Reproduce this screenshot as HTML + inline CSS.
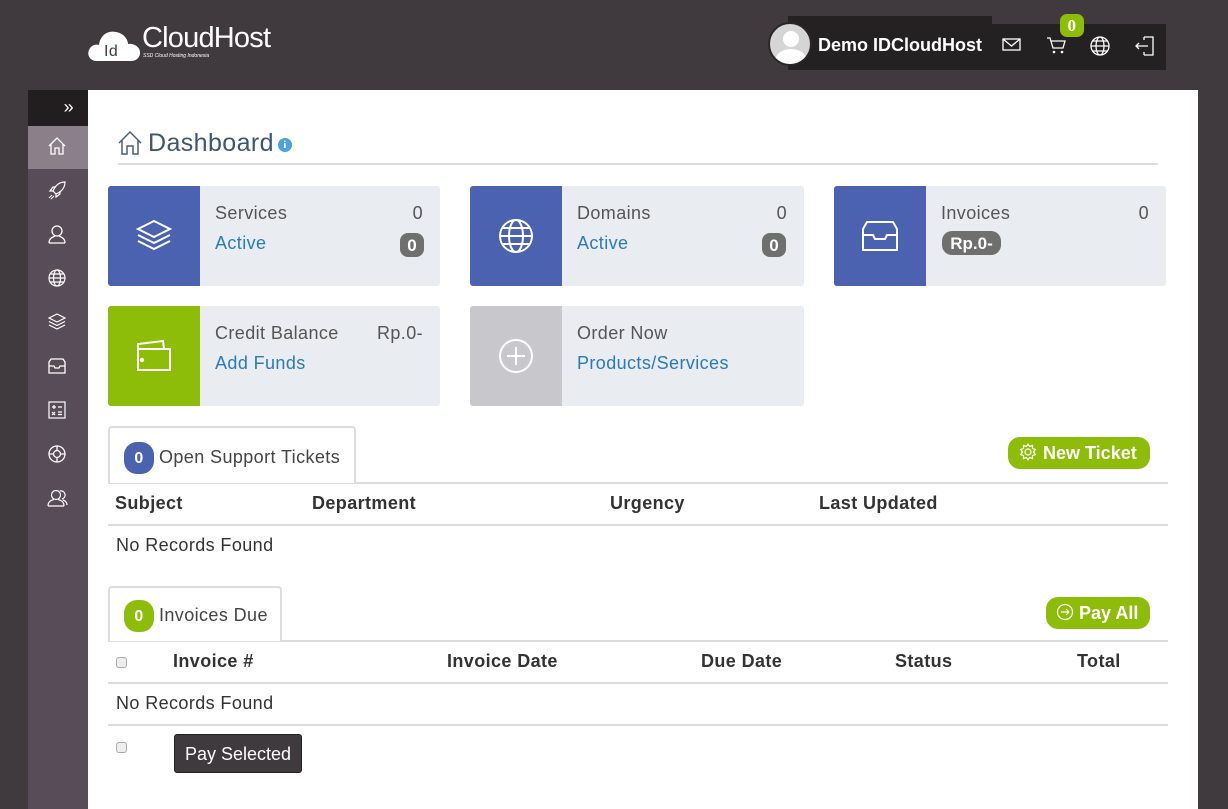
<!DOCTYPE html>
<html><head><meta charset="utf-8"><style>
*{box-sizing:border-box;margin:0;padding:0}
body{width:1228px;height:809px;background:#403a3e;font-family:"Liberation Sans",sans-serif;position:relative;overflow:hidden;color:#333;letter-spacing:0.4px}
.abs{position:absolute}
.side{left:28px;top:90px;width:60px;height:719px;background:#594c59}
.side .top{height:36px;background:#221e20;color:#fff;text-align:right;padding-right:14px;font-size:18px;line-height:34px}
.side .act{height:43px;background:#8b7f8a}
.side svg{position:absolute;left:19px}
.main{left:88px;top:90px;width:1110px;height:719px;background:#fff}
.card{position:absolute;height:100px;background:#e9ecf0;border-radius:3px;overflow:hidden}
.card .ic{position:absolute;left:0;top:0;width:92px;height:100px;display:flex;align-items:center;justify-content:center}
.card .t{position:absolute;left:107px;top:17px;font-size:18px;color:#555}
.card .l{position:absolute;left:107px;top:47px;font-size:18px;color:#2a7ab8}
.card .n{position:absolute;right:17px;top:17px;font-size:18px;color:#555}
.badge{position:absolute;background:#6f6f6f;color:#fff;font-weight:bold;border-radius:8px;font-size:17px;text-align:center;letter-spacing:0}
.th{position:absolute;font-weight:bold;font-size:18px;color:#333}
.hr{position:absolute;left:108px;width:1060px;height:2px;background:#ddd}
.gbtn{position:absolute;background:#8dbd08;color:#fff;font-weight:bold;font-size:18px;border-radius:12px;height:32px;line-height:32px;letter-spacing:0}
.tab{position:absolute;left:108px;border:2px solid #ddd;border-bottom:none;border-radius:4px 4px 0 0;background:#fff;font-size:18px;color:#444}
.cnt{display:inline-block;width:30px;height:32px;border-radius:13px;color:#fff;font-weight:bold;text-align:center;line-height:34px;font-size:16px;vertical-align:middle;margin-right:5px}
.cb{position:absolute;width:11px;height:11px;border:1px solid #aaa;border-radius:3px;background:#eee}
</style></head><body>
<!-- logo -->
<svg class="abs" style="left:87px;top:24px" width="54" height="38" viewBox="0 0 54 38"><path d="M10 37 C2 37 0 30 2 26 C4 21 9 20 12 21 C13 12 20 6 29 8 C36 9 41 15 41 20 C48 19 54 24 53 30 C52 35 48 37 44 37 Z" fill="#fff"/><text x="17" y="32" font-family="Liberation Sans" font-size="16" fill="#403a3e">Id</text></svg>
<div class="abs" style="left:142px;top:22px;color:#fff;font-size:29px;letter-spacing:-0.8px">CloudHost</div>
<div class="abs" style="left:143px;top:53px;color:#fff;font-size:5px;font-style:italic;letter-spacing:0">SSD Cloud Hosting Indonesia</div>
<!-- header -->
<div class="abs" style="left:788px;top:16px;width:204px;height:54px;background:#242123"></div>
<div class="abs" style="left:992px;top:24px;width:174px;height:46px;background:#242123"></div>
<div class="abs" style="left:768px;top:22px;width:44px;height:44px;border-radius:50%;background:#d5d5d5;border:2px solid #2a2628;overflow:hidden"><div class="abs" style="left:13px;top:7px;width:16px;height:16px;border-radius:50%;background:#fff"></div><div class="abs" style="left:5px;top:25px;width:32px;height:24px;border-radius:50%;background:#fff"></div></div>
<div class="abs" style="left:818px;top:35px;color:#fff;font-size:18px;font-weight:bold;letter-spacing:0">Demo IDCloudHost</div>
<svg class="abs" style="left:1002px;top:37px" width="20" height="16"><rect x="1" y="2" width="17" height="11" fill="none" stroke="#fff" stroke-width="1.3"/><path d="M1 2 L9.5 9 L18 2" fill="none" stroke="#fff" stroke-width="1.3"/></svg>
<svg class="abs" style="left:1046px;top:36px" width="22" height="20"><path d="M1 2 H4 L7 12 H17 L19 5 H5" fill="none" stroke="#fff" stroke-width="1.3"/><circle cx="8" cy="16" r="1.3" fill="#fff"/><circle cx="16" cy="16" r="1.3" fill="#fff"/></svg>
<div class="abs" style="left:1060px;top:14px;width:24px;height:23px;background:#8dbd08;border-radius:7px;color:#fff;font-weight:bold;text-align:center;line-height:24px;font-family:'Liberation Serif',serif;font-size:17px">0</div>
<svg class="abs" style="left:1089px;top:35px" width="22" height="22" viewBox="0 0 22 22" fill="none" stroke="#fff" stroke-width="1.3"><circle cx="11" cy="11" r="9"/><ellipse cx="11" cy="11" rx="4" ry="9"/><path d="M2 11H20M3.5 6H18.5M3.5 16H18.5"/></svg>
<svg class="abs" style="left:1134px;top:35px" width="22" height="22" fill="none" stroke="#fff" stroke-width="1.3"><path d="M10 2H19V20H10M10 2V5M10 20V17M2 11H14M5 8L2 11L5 14"/></svg>
<!-- sidebar -->
<div class="abs side"><div class="top">»</div><div class="act"></div>
<svg style="top:46px" width="20" height="20" fill="none" stroke="#fff" stroke-width="1.3"><path d="M2 10L10 2L18 10M4 8V18H8V12H12V18H16V8"/></svg>
<svg style="top:90px" width="20" height="20" fill="none" stroke="#fff" stroke-width="1.2"><path d="M18 2C12 2 8 6 6 11L9 14C14 12 18 8 18 2ZM6 11L3 11L6 7H9M9 14V17L13 14V11M5 15L2 18M7 16L4 19"/></svg>
<svg style="top:134px" width="20" height="20" fill="none" stroke="#fff" stroke-width="1.3"><circle cx="10" cy="7" r="5"/><path d="M2 19C2 14 6 13 8 12M18 19C18 14 14 13 12 12M2 19H18"/></svg>
<svg style="top:178px" width="20" height="20" fill="none" stroke="#fff" stroke-width="1.2"><circle cx="10" cy="10" r="8"/><ellipse cx="10" cy="10" rx="3.5" ry="8"/><path d="M2 10H18M3.5 6H16.5M3.5 14H16.5"/></svg>
<svg style="top:222px" width="20" height="20" fill="none" stroke="#fff" stroke-width="1.2"><path d="M10 2L18 6L10 10L2 6ZM2 9.5L10 13.5L18 9.5M2 13L10 17L18 13"/></svg>
<svg style="top:266px" width="20" height="20" fill="none" stroke="#fff" stroke-width="1.3"><path d="M2 6V17H18V6L16 3H4ZM2 10H7L8 12H12L13 10H18"/></svg>
<svg style="top:310px" width="20" height="20" fill="none" stroke="#fff" stroke-width="1.2"><rect x="2" y="2" width="16" height="16"/><path d="M5 7H9M7 5V9M11 7H15M5 12L8 15M8 12L5 15M11 12H15M11 14.5H15"/></svg>
<svg style="top:354px" width="20" height="20" fill="none" stroke="#fff" stroke-width="1.3"><circle cx="10" cy="10" r="8"/><circle cx="10" cy="10" r="3.5"/><path d="M10 2V6.5M10 13.5V18M2 10H6.5M13.5 10H18"/></svg>
<svg style="top:398px" width="22" height="20" fill="none" stroke="#fff" stroke-width="1.2"><circle cx="9" cy="7" r="4.5"/><path d="M1 18C1 13 5 12 7 11.5M17 18C17 13 13 12 11 11.5M1 18H17M13 3A4 4 0 0 1 15 11M16 12C19 13 20 15 20 17"/></svg>
</div>
<!-- main -->
<div class="abs main"></div>
<svg class="abs" style="left:117px;top:130px" width="26" height="26" fill="none" stroke="#4a5e80" stroke-width="1.5"><path d="M2 13L13 2L24 13M5 10V24H10V16H16V24H21V10"/></svg>
<div class="abs" style="left:148px;top:129px;font-size:25px;color:#3f5575">Dashboard</div>
<div class="abs" style="left:278px;top:138px;width:14px;height:14px;border-radius:50%;background:#4aa3dd;color:#fff;font-size:11px;font-weight:bold;text-align:center;line-height:14px;font-family:'Liberation Serif',serif">i</div>
<div class="abs" style="left:118px;top:163px;width:1040px;height:2px;background:#ddd"></div>

<div class="card" style="left:108px;top:186px;width:332px"><div class="ic" style="background:#4a62b0"><svg width="38" height="36" fill="none" stroke="#fff" stroke-width="2"><path d="M19 3L35 11L19 19L3 11ZM3 17L19 25L35 17M3 23L19 31L35 23"/></svg></div><div class="t">Services</div><div class="n">0</div><div class="l">Active</div><div class="badge" style="left:292px;top:47px;width:24px;height:24px;line-height:25px">0</div></div>
<div class="card" style="left:470px;top:186px;width:334px"><div class="ic" style="background:#4a62b0"><svg width="38" height="38" viewBox="0 0 38 38" fill="none" stroke="#fff" stroke-width="2"><circle cx="19" cy="19" r="16"/><ellipse cx="19" cy="19" rx="7" ry="16"/><path d="M3 19H35M6 11H32M6 27H32"/></svg></div><div class="t">Domains</div><div class="n">0</div><div class="l">Active</div><div class="badge" style="left:292px;top:47px;width:24px;height:24px;line-height:25px">0</div></div>
<div class="card" style="left:834px;top:186px;width:332px"><div class="ic" style="background:#4a62b0"><svg width="38" height="34" fill="none" stroke="#fff" stroke-width="2"><path d="M2 10V31H36V10L32 3H6ZM2 16H12L14 20H24L26 16H36"/></svg></div><div class="t">Invoices</div><div class="n">0</div><div class="badge" style="left:108px;top:45px;width:59px;height:24px;line-height:25px;border-radius:10px">Rp.0-</div></div>
<div class="card" style="left:108px;top:306px;width:332px"><div class="ic" style="background:#8dbd08"><svg width="38" height="34" fill="none" stroke="#fff" stroke-width="2"><path d="M3 10V31H35V10ZM3 10V5L28 2L29 10"/><circle cx="7" cy="21" r="1.2" fill="#fff"/></svg></div><div class="t">Credit Balance</div><div class="n">Rp.0-</div><div class="l">Add Funds</div></div>
<div class="card" style="left:470px;top:306px;width:334px"><div class="ic" style="background:#c7c7cc"><svg width="38" height="38" fill="none" stroke="#fff" stroke-width="2"><circle cx="19" cy="19" r="16"/><path d="M19 10V28M10 19H28"/></svg></div><div class="t">Order Now</div><div class="l">Products/Services</div></div>

<!-- tickets -->
<div class="hr" style="top:482px"></div>
<div class="tab" style="top:426px;width:248px;height:57px;padding:14px 0 0 14px"><span class="cnt" style="background:#4a62b0">0</span>Open Support Tickets</div>
<div class="gbtn" style="left:1008px;top:437px;width:142px;padding-left:10px"><svg width="20" height="20" style="vertical-align:-3px" fill="none" stroke="#fff" stroke-width="1.2"><circle cx="10" cy="10" r="3"/><path d="M10 2L11.5 4.5L14.5 3.5L14.5 6.5L17.5 7.5L15.5 10L17.5 12.5L14.5 13.5L14.5 16.5L11.5 15.5L10 18L8.5 15.5L5.5 16.5L5.5 13.5L2.5 12.5L4.5 10L2.5 7.5L5.5 6.5L5.5 3.5L8.5 4.5Z"/></svg> New Ticket</div>
<div class="th" style="left:115px;top:493px">Subject</div>
<div class="th" style="left:312px;top:493px">Department</div>
<div class="th" style="left:610px;top:493px">Urgency</div>
<div class="th" style="left:819px;top:493px">Last Updated</div>
<div class="hr" style="top:524px"></div>
<div class="abs" style="left:116px;top:535px;font-size:18px">No Records Found</div>

<!-- invoices -->
<div class="hr" style="top:640px"></div>
<div class="tab" style="top:586px;width:174px;height:55px;padding:12px 0 0 14px"><span class="cnt" style="background:#8dbd08">0</span>Invoices Due</div>
<div class="gbtn" style="left:1046px;top:597px;width:104px;padding-left:10px"><svg width="18" height="18" style="vertical-align:-2px" fill="none" stroke="#fff" stroke-width="1.2"><circle cx="9" cy="9" r="7.5"/><path d="M5 9H13M10 6L13 9L10 12"/></svg> Pay All</div>
<div class="cb" style="left:116px;top:657px"></div>
<div class="th" style="left:173px;top:651px">Invoice #</div>
<div class="th" style="left:447px;top:651px">Invoice Date</div>
<div class="th" style="left:701px;top:651px">Due Date</div>
<div class="th" style="left:895px;top:651px">Status</div>
<div class="th" style="left:1077px;top:651px">Total</div>
<div class="hr" style="top:682px"></div>
<div class="abs" style="left:116px;top:693px;font-size:18px">No Records Found</div>
<div class="hr" style="top:724px"></div>
<div class="cb" style="left:116px;top:742px"></div>
<div class="abs" style="left:174px;top:734px;width:128px;height:39px;background:#3f3a3e;border:1px solid #222;border-radius:3px;color:#fff;font-size:18px;text-align:center;line-height:38px;letter-spacing:0">Pay Selected</div>
</body></html>
